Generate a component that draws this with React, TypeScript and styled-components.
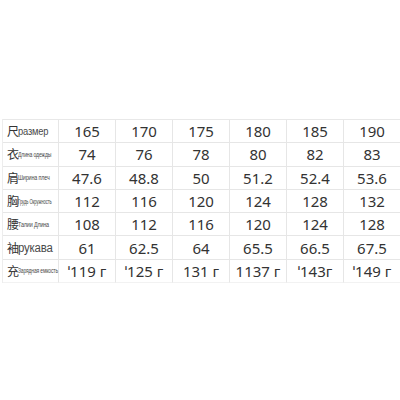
import React from 'react';
import styled, { createGlobalStyle } from 'styled-components';

const GlobalStyle = createGlobalStyle`
  html, body {
    margin: 0;
    padding: 0;
    background: #ffffff;
  }
  body {
    font-family: "Noto Sans", "Open Sans", sans-serif;
  }
`;

const Page = styled.div`
  width: 400px;
  height: 400px;
  padding: 119px 0 0 2px;
  box-sizing: border-box;
  background: #ffffff;
`;

const Table = styled.div`
  display: grid;
  grid-template-columns: 56px repeat(6, 57px);
  grid-auto-rows: 23.3px;
  border-top: 1px solid #e8e8e8;
  border-left: 1px solid #ededed;
  width: max-content;
`;

const Cell = styled.div<{ $last?: boolean }>`
  display: flex;
  align-items: center;
  justify-content: center;
  box-sizing: border-box;
  border-right: 1px solid #e6e6e6;
  border-bottom: 1px solid ${p => (p.$last ? '#f2f2f2' : '#e6e6e6')};
  font-size: 15px;
  color: #333333;
  white-space: nowrap;
`;

const LabelCell = styled(Cell)`
  justify-content: flex-start;
  padding-left: 4px;
  position: relative;
  z-index: 1;
`;

const Glyph = styled.span`
  flex-shrink: 0;
  font-family: "Noto Sans CJK SC", sans-serif;
  font-size: 12px;
  color: #333;
  line-height: 1;
  margin-right: -1px;
`;

const LabelText = styled.span<{ $size: number; $squeeze: number }>`
  flex-shrink: 0;
  font-family: "Liberation Sans", Arial, sans-serif;
  font-size: ${p => p.$size}px;
  color: #4a4a4a;
  display: inline-block;
  transform: scaleX(${p => p.$squeeze});
  transform-origin: left center;
  letter-spacing: -0.2px;
`;

type Row = {
  glyph: string;
  label: string;
  size: number;
  squeeze: number;
  values: string[];
};

const rows: Row[] = [
  { glyph: '尺', label: 'размер', size: 11, squeeze: 0.85, values: ['165', '170', '175', '180', '185', '190'] },
  { glyph: '衣', label: 'Длина одежды', size: 7.5, squeeze: 0.68, values: ['74', '76', '78', '80', '82', '83'] },
  { glyph: '肩', label: 'Ширина плеч', size: 7.5, squeeze: 0.72, values: ['47.6', '48.8', '50', '51.2', '52.4', '53.6'] },
  { glyph: '胸', label: 'Грудь Окружность', size: 7.5, squeeze: 0.56, values: ['112', '116', '120', '124', '128', '132'] },
  { glyph: '腰', label: 'Талии Длина', size: 7.5, squeeze: 0.72, values: ['108', '112', '116', '120', '124', '128'] },
  { glyph: '袖', label: 'рукава', size: 12, squeeze: 0.95, values: ['61', '62.5', '64', '65.5', '66.5', '67.5'] },
  { glyph: '充', label: 'Зарядная емкость', size: 7.5, squeeze: 0.66, values: ['ˈ119 г', 'ˈ125 г', '131 г', '1137 г', 'ˈ143г', 'ˈ149 г'] },
];

export default function App() {
  return (
    <Page>
      <GlobalStyle />
      <Table>
        {rows.map((row, i) => {
          const last = i === rows.length - 1;
          return (
            <React.Fragment key={row.label}>
              <LabelCell $last={last}>
                <Glyph>{row.glyph}</Glyph>
                <LabelText $size={row.size} $squeeze={row.squeeze}>{row.label}</LabelText>
              </LabelCell>
              {row.values.map((v, j) => (
                <Cell key={j} $last={last}>{v}</Cell>
              ))}
            </React.Fragment>
          );
        })}
      </Table>
    </Page>
  );
}
